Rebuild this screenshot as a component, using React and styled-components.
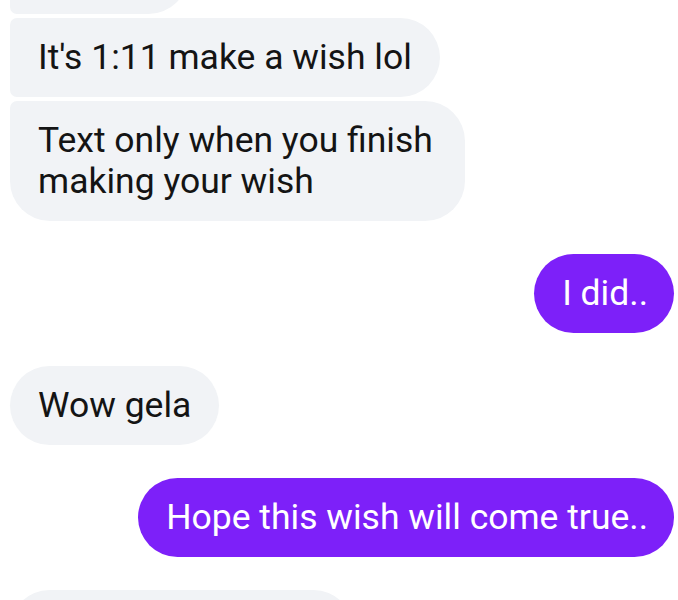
import React from "react";
import styled, { createGlobalStyle, css } from "styled-components";

const Global = createGlobalStyle`
  html, body { margin: 0; padding: 0; background: #ffffff; }
  body { font-family: Roboto, "Noto Sans", "Liberation Sans", sans-serif; }
`;

const Screen = styled.div`
  width: 678px;
  height: 600px;
  overflow: hidden;
  background: #ffffff;
`;

const Thread = styled.div`
  display: flex;
  flex-direction: column;
  margin-top: -65px;
  padding: 0 4px 0 10px;
`;

const Group = styled.div`
  display: flex;
  flex-direction: column;
  align-items: ${(p) => (p.$mine ? "flex-end" : "flex-start")};
  gap: 4px;
  & + & { margin-top: 33px; }
`;

const BIG = "40px";
const SMALL = "7px";

const radius = (side, pos) => {
  if (side === "mine") return css`border-radius: ${BIG};`;
  const tl = pos === "first" || pos === "single" ? BIG : SMALL;
  const bl = pos === "last" || pos === "single" ? BIG : SMALL;
  return css`border-radius: ${tl} ${BIG} ${BIG} ${bl};`;
};

const Bubble = styled.div`
  box-sizing: border-box;
  max-width: ${(p) => (p.$mine ? "580px" : "455px")};
  padding: 19px ${(p) => (p.$mine ? "26px" : "28px")} 19px 28px;
  font-size: 35.5px;
  line-height: 41px;
  background: ${(p) => (p.$mine ? "#7d20f9" : "#f1f3f6")};
  color: ${(p) => (p.$mine ? "#ffffff" : "#141414")};
  ${(p) => radius(p.$mine ? "mine" : "theirs", p.$pos)}
`;

const groups = [
  { mine: false, msgs: ["Hahaha", "It's 1:11 make a wish lol", "Text only when you finish making your wish"] },
  { mine: true, msgs: ["I did.."] },
  { mine: false, msgs: ["Wow gela"] },
  { mine: true, msgs: ["Hope this wish will come true.."] },
  { mine: false, msgs: ["I hope so too, gela"] },
];

const posOf = (i, n) => (n === 1 ? "single" : i === 0 ? "first" : i === n - 1 ? "last" : "middle");

export default function App() {
  return (
    <>
      <Global />
      <Screen>
        <Thread>
          {groups.map((g, gi) => (
            <Group key={gi} $mine={g.mine}>
              {g.msgs.map((m, i) => (
                <Bubble key={i} $mine={g.mine} $pos={posOf(i, g.msgs.length)}>
                  {m}
                </Bubble>
              ))}
            </Group>
          ))}
        </Thread>
      </Screen>
    </>
  );
}
